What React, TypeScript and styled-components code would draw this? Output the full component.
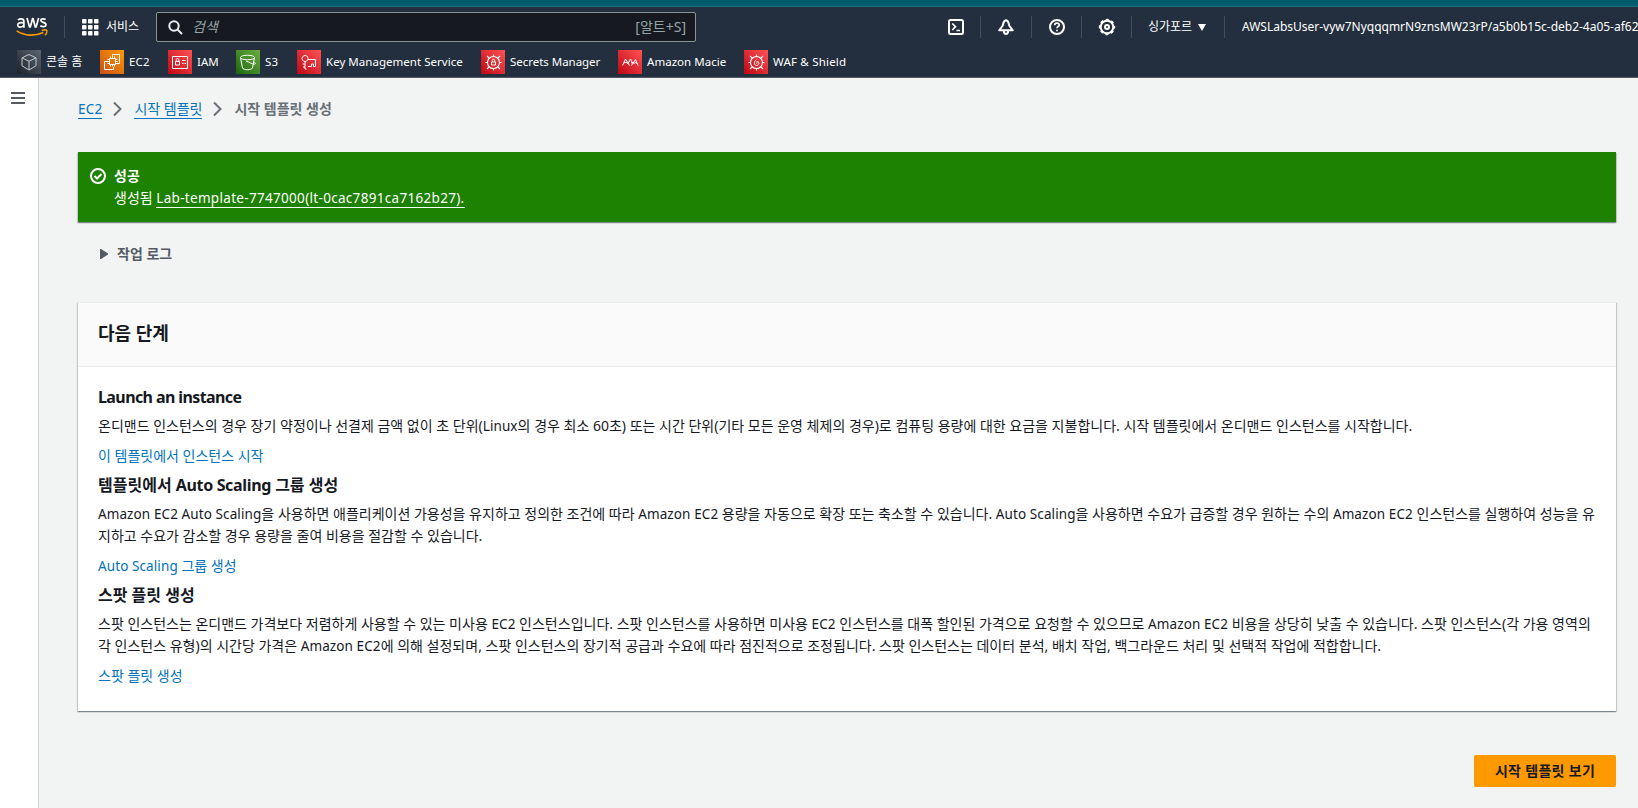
import React from 'react';
import styled, { createGlobalStyle } from 'styled-components';

const Global = createGlobalStyle`
  *, *::before, *::after { box-sizing: border-box; }
  body { margin: 0; overflow: hidden; background: #f2f3f3; color: #16191f;
    font-family: 'Noto Sans', 'Noto Sans CJK KR', sans-serif; font-size: 14px; line-height: 22px; }
  p, h2, h3 { margin: 0; }
`;

const Page = styled.div`display: flex; flex-direction: column; width: 100%; height: 808px; overflow: hidden;`;
const Strip = styled.div`flex: none; height: 7px; background: #005b6d; border-bottom: 1px solid #1b7180;`;
const Header = styled.header`flex: none; height: 71px; background: #232f3e; border-bottom: 1px solid #545b64; color: #fff; font-size: 12px;`;
const NavBar = styled.div`display: flex; align-items: center; height: 40px; padding-left: 16px; & > * { flex: none; }`;
const Divider = styled.span<{ $left?: number; $right?: number }>`flex: none; width: 1px; height: 22px; margin: 0 ${p => p.$right ?? 0}px 0 ${p => p.$left ?? 0}px; background: #414d5c;`;
const Services = styled.div`display: flex; align-items: center; gap: 7px; width: 74px; white-space: nowrap;`;
const Search = styled.div`display: flex; align-items: center; width: 540px; height: 30px; padding: 0 9px 0 11px; background: #16191f; border: 1px solid #879596; border-radius: 2px; color: #95a5a6; font-size: 14px;`;
const Placeholder = styled.span`flex: 1; padding-left: 9px; font-style: italic;`;
const Tools = styled.div`display: flex; align-items: center; margin-left: 235px;`;
const Tool = styled.span`display: flex; flex: none; justify-content: center; width: 49px;`;
const Region = styled.span`display: flex; flex: none; align-items: center; gap: 6px; padding-left: 16px; width: 92px; white-space: nowrap;`;
const Account = styled.span`padding-left: 17px; white-space: nowrap; font-size: 12px; letter-spacing: -0.01px;`;
const Favorites = styled.div`display: flex; align-items: center; height: 30px; padding-left: 17px; line-height: 24px;`;
const Favorite = styled.div<{ $w: number }>`display: flex; align-items: center; gap: 5px; width: ${p => p.$w}px; white-space: nowrap;`;
const Tile = styled.svg`display: block; flex: none; width: 24px; height: 24px;`;

const Latin = styled.span<{ $size?: number; $ls?: number }>`font-size: ${p => p.$size ?? 13.5}px; letter-spacing: ${p => p.$ls ?? 0.1}px;`;

const Body = styled.div`flex: 1; display: flex; min-height: 0;`;
const Side = styled.aside`display: flex; align-items: flex-start; flex: none; width: 39px; padding: 14px 0 0 11px; background: #fff; border-right: 1px solid #cdd3d3;`;
const Main = styled.main`flex: 1; min-width: 0; padding: 20px 22px 0 39px;`;
const Crumbs = styled.nav`display: flex; align-items: center; height: 22px; color: #687078;`;
const Crumb = styled.a`color: #0073bb; border-bottom: 1px solid #0073bb; line-height: 18px; white-space: nowrap;`;
const Current = styled.span`font-weight: 700; white-space: nowrap;`;
const Chevron = styled.svg`flex: none; display: block; margin: 0 12px 0 11px;`;
const shadow = '0 1px 1px 0 rgba(0,28,36,.3), 1px 1px 1px 0 rgba(0,28,36,.15), -1px 1px 1px 0 rgba(0,28,36,.15)';
const Flash = styled.section`display: flex; gap: 8px; height: 70px; margin-top: 32px; padding: 13px 12px; background: #1d8102; color: #fff; box-shadow: ${shadow};`;
const FlashIcon = styled.svg`flex: none; margin-top: 3px;`;
const FlashTitle = styled.p`font-weight: 700;`;
const FlashLink = styled.a`border-bottom: 1px solid #fff; font-size: 13.5px; letter-spacing: 0.31px;`;
const Log = styled.div`display: flex; align-items: center; gap: 9px; height: 22px; margin: 21px 0 0 22px; color: #545b64; font-weight: 700;`;
const Card = styled.section`height: 409px; margin-top: 37px; background: #fff; border-top: 1px solid #eaeded; box-shadow: ${shadow};`;
const CardHeader = styled.div`height: 64px; padding: 19px 20px; background: #fafafa; border-bottom: 1px solid #eaeded;`;
const CardTitle = styled.h2`font-size: 18px; line-height: 22px;`;
const CardBody = styled.div`padding: 19px 20px;`;
const StepTitle = styled.h3`font-size: 16px; line-height: 22px; height: 22px;`;
const StepText = styled.div`margin-top: 7px; white-space: nowrap;`;
const StepLink = styled.a`display: block; margin-top: 8px; height: 22px; color: #0073bb; margin-bottom: 7px;`;
const Line = styled.p`height: 22px;`;
const Actions = styled.div`display: flex; justify-content: flex-end; margin-top: 44px;`;
const Button = styled.button`width: 142px; height: 32px; padding: 0; border: 0; border-radius: 2px; background: #ff9900; color: #16191f; font: 700 14px/22px 'Noto Sans', 'Noto Sans CJK KR', sans-serif; letter-spacing: 0.3px;`;

/* Sets runs of Latin words slightly smaller than the Hangul around them. */
const Mixed = ({ text, size, ls }: { text: string; size?: number; ls?: number }) => (
  <>
    {text.split(/([A-Za-z][A-Za-z0-9 ]*[A-Za-z0-9])/).map((part, i) =>
      i % 2 ? <Latin key={i} $size={size} $ls={ls}>{part}</Latin> : part)}
  </>
);

const AwsLogo = () => (
  <svg width="32" height="20" viewBox="0 0 32 20" fill="none">
    <g stroke="#fff" strokeWidth="1.7">
      <path d="M2 3C2.800 2.200 3.900 1.800 5.100 1.800c2 0 2.800.9 2.800 2.600v6.300M7.900 5.800C4 5.100 1.700 5.900 1.700 8.100c0 2.900 4.600 2.600 6.200 0" />
      <path d="M11 1.100l2.500 8.900h.8l2.200-8.300h.6l2.200 8.300h.8l2.500-8.900" strokeLinejoin="round" />
      <path d="M29.600 2.400c-1.800-.9-4.800-.8-4.800 1.100 0 2.400 5.200 1.400 5.200 4.200 0 2.300-3.500 2.500-5.700 1.100" />
    </g>
    <path d="M.7 13.900c7.700 5.200 18.400 5.400 26.600 1.500" stroke="#f90" strokeWidth="1.700" />
    <path d="M25.800 13.500c1.700-.6 4.500-1 5 .1.300 1-.6 3.300-1.900 4.600" stroke="#f90" strokeWidth="1.400" />
  </svg>
);

type Kind = 'home' | 'ec2' | 'iam' | 's3' | 'kms' | 'secrets' | 'macie' | 'waf';
const gradients: Record<string, [string, string]> = {
  home: ['#1b222a', '#5b6470'], ec2: ['#c8511b', '#ff9900'], s3: ['#1b660f', '#6cae3e'], red: ['#bd0816', '#ff5252'],
};
const target = <><circle cx="12.500" cy="12.500" r="6" strokeWidth="1.100" /><path d="M4.500 12.500h2.500m11 0h2.500M12.500 4.500v2.500m0 11v2.500M6 6l2.500 2.500m8 8L19 19M6 19l2.500-2.500m8-8L19 6" strokeWidth="1.100" /></>;
const glyphs: Record<Kind, React.ReactNode> = {
  home: <path d="M12 4.500l7 3.300v8L12 20l-7-4.200v-8zM5 7.800l7 3.500 7-3.500M12 11.300V20" stroke="#c4cad0" />,
  ec2: <path d="M9.500 8.500h6v6h-6zM10.500 6.500v2m2-2v2m2-2v2m-4 6v2m2-2v2m2-2v2m-7-7h2m-2 2h2m-2 2h2m6-4h2m-2 2h2m-2 2h2M12.500 7V4.500h7v9H17M8 11.500H4.500v8h9V17" />,
  iam: <path d="M4.500 6.500h15v12h-15zM7.500 11.500h4v3.500h-4zM8.200 11.500V9.800a1.300 1.300 0 012.600 0v1.700M14 10.500h3.500M14 13.500h1.500m1 0h1.500" />,
  s3: <path d="M4.500 7.500c0-3 14-3 14 0s-14 3-14 0l2 10.500c1 2.300 9 2.300 10 0l2-10.500M10 11l7 3c3 .8 3-1.200.5-2.200" />,
  kms: <path d="M8 11.500a3 3 0 11.1 0zM8 11.500V19m0-5H5.500m2.500 3H6M8 19h1.500M11 9.500h7.500v7h-2V14h-2v2.500h-3.500" />,
  secrets: <>{target}<path d="M10.500 12h4v3h-4zM11.300 12v-1.500a1.200 1.200 0 012.400 0V12" /></>,
  macie: <path d="M4.500 15.500l3-6.500 4 6.500M6 13c1.500-1.500 3-.5 4 1M10 13.500l2.500-4.500 2 4M13.500 15.500l4-6 2.500 6M13 13c1.500-1.500 2.500 1.500 3.500 0s2 0 2.500 1" />,
  waf: <>{target}<path d="M12.500 9.500c-3.500 3-2 6 0 6s3.500-2 1-4.500c-1 1 0 2.500-1 2.500" /></>,
};
const ServiceTile = ({ kind }: { kind: Kind }) => {
  const [from, to] = gradients[kind] ?? gradients.red;
  return (
    <Tile viewBox="0 0 24 24" fill="none" stroke="#fff" strokeWidth="1">
      <defs><linearGradient id={`g-${kind}`} x1="0" y1="1" x2="1" y2="0"><stop stopColor={from} /><stop offset="1" stopColor={to} /></linearGradient></defs>
      <path d="M0 0h24v24H0z" fill={`url(#g-${kind})`} stroke="none" />
      {glyphs[kind]}
    </Tile>
  );
};

const favorites: { kind: Kind; label: string; w: number; ls?: number }[] = [
  { kind: 'home', label: '콘솔 홈', w: 83 }, { kind: 'ec2', label: 'EC2', w: 68, ls: 0.2 }, { kind: 'iam', label: 'IAM', w: 68 },
  { kind: 's3', label: 'S3', w: 61, ls: 0.2 }, { kind: 'kms', label: 'Key Management Service', w: 184 },
  { kind: 'secrets', label: 'Secrets Manager', w: 137, ls: -0.03 }, { kind: 'macie', label: 'Amazon Macie', w: 126 }, { kind: 'waf', label: 'WAF & Shield', w: 110, ls: 0.2 },
];

const steps = [
  { title: 'Launch an instance', ls: -0.6, lines: ['온디맨드 인스턴스의 경우 장기 약정이나 선결제 금액 없이 초 단위(Linux의 경우 최소 60초) 또는 시간 단위(기타 모든 운영 체제의 경우)로 컴퓨팅 용량에 대한 요금을 지불합니다. 시작 템플릿에서 온디맨드 인스턴스를 시작합니다.'], link: '이 템플릿에서 인스턴스 시작' },
  { title: '템플릿에서 Auto Scaling 그룹 생성', ls: -0.34, lines: ['Amazon EC2 Auto Scaling을 사용하면 애플리케이션 가용성을 유지하고 정의한 조건에 따라 Amazon EC2 용량을 자동으로 확장 또는 축소할 수 있습니다. Auto Scaling을 사용하면 수요가 급증할 경우 원하는 수의 Amazon EC2 인스턴스를 실행하여 성능을 유', '지하고 수요가 감소할 경우 용량을 줄여 비용을 절감할 수 있습니다.'], link: 'Auto Scaling 그룹 생성' },
  { title: '스팟 플릿 생성', ls: 0, lines: ['스팟 인스턴스는 온디맨드 가격보다 저렴하게 사용할 수 있는 미사용 EC2 인스턴스입니다. 스팟 인스턴스를 사용하면 미사용 EC2 인스턴스를 대폭 할인된 가격으로 요청할 수 있으므로 Amazon EC2 비용을 상당히 낮출 수 있습니다. 스팟 인스턴스(각 가용 영역의', '각 인스턴스 유형)의 시간당 가격은 Amazon EC2에 의해 설정되며, 스팟 인스턴스의 장기적 공급과 수요에 따라 점진적으로 조정됩니다. 스팟 인스턴스는 데이터 분석, 배치 작업, 백그라운드 처리 및 선택적 작업에 적합합니다.'], link: '스팟 플릿 생성' },
];

const ChevronIcon = () => (
  <Chevron width="9" height="16" viewBox="0 0 9 16" fill="none" stroke="#687078" strokeWidth="2"><path d="M1 1.500L7.500 8 1 14.500" /></Chevron>
);

export default function App() {
  return (
    <Page>
      <Global />
      <Strip />
      <Header>
        <NavBar>
          <AwsLogo />
          <Divider $left={16} $right={17} />
          <Services>
            <svg width="17" height="17" viewBox="0 0 17 17" fill="#fff">
              {[0, 6, 12].flatMap(y => [0, 6, 12].map(x => <rect key={`${x}-${y}`} x={x} y={y} width="4.500" height="4.500" rx=".8" />))}
            </svg>
            서비스
          </Services>
          <Search>
            <svg width="15" height="15" viewBox="0 0 15 15" fill="none" stroke="#eaeded" strokeWidth="2"><circle cx="6" cy="6" r="4.700" /><path d="M9.500 9.500l4.500 4.500" /></svg>
            <Placeholder>검색</Placeholder>
            <span>[알트+S]</span>
          </Search>
          <Tools>
            <Tool><svg width="18" height="18" viewBox="0 0 18 18" fill="none" stroke="#fff" strokeWidth="2"><rect x="2" y="2" width="14" height="14" rx="1.500" /><path d="M5.300 5.500L8.500 8.700 5.300 12M9.500 12.500h3.500" strokeWidth="1.700" /></svg></Tool>
            <Divider />
            <Tool><svg width="18" height="18" viewBox="0 0 18 18" fill="none" stroke="#fff" strokeWidth="2"><path d="M9 2.200C6 2.700 6.500 6 5.500 8L2.200 12.300h13.600L12.500 8C11.500 6 12 2.700 9 2.200zM6.800 13c.3 4 4.100 4 4.400 0" strokeLinejoin="round" /></svg></Tool>
            <Divider $left={1} />
            <Tool><svg width="18" height="18" viewBox="0 0 18 18" fill="none" stroke="#fff" strokeWidth="2"><circle cx="9" cy="9" r="7" /><path d="M6.700 7.300c0-3 4.600-2.800 4.600-.3 0 1.500-2.300 1.500-2.300 3.300M9 11.700v1.600" strokeWidth="1.700" /></svg></Tool>
            <Divider />
            <Tool><svg width="18" height="18" viewBox="0 0 18 18" fill="none" stroke="#fff"><circle cx="9" cy="9" r="6.300" strokeWidth="2" /><circle cx="9" cy="9" r="7.400" strokeWidth="1.600" strokeDasharray="3.100 2.711" strokeDashoffset="1.550" /><circle cx="9" cy="9" r="2" strokeWidth="2" /></svg></Tool>
            <Divider />
            <Region>싱가포르 <svg width="8" height="7" viewBox="0 0 8 7" fill="#fff"><path d="M0 0h8L4 7z" /></svg></Region>
            <Divider />
            <Account>AWSLabsUser-vyw7NyqqqmrN9znsMW23rP/a5b0b15c-deb2-4a05-af62</Account>
          </Tools>
        </NavBar>
        <Favorites>
          {favorites.map(f => (
            <Favorite key={f.kind} $w={f.w}>
              <ServiceTile kind={f.kind} />
              {f.kind === 'home' ? f.label : <Latin $size={11.5} $ls={f.ls ?? 0.03}>{f.label}</Latin>}
            </Favorite>
          ))}
        </Favorites>
      </Header>
      <Body>
        <Side>
          <svg width="14" height="12" viewBox="0 0 14 12" stroke="#545b64" strokeWidth="2"><path d="M0 1h14M0 6h14M0 11h14" /></svg>
        </Side>
        <Main>
          <Crumbs>
            <Crumb><Latin $ls={0.2}>EC2</Latin></Crumb><ChevronIcon /><Crumb>시작 템플릿</Crumb><ChevronIcon /><Current>시작 템플릿 생성</Current>
          </Crumbs>
          <Flash>
            <FlashIcon width="16" height="16" viewBox="0 0 16 16" fill="none" stroke="#fff" strokeWidth="2"><circle cx="8" cy="8" r="7" /><path d="M4.500 8l2.500 2.500L11.500 6" /></FlashIcon>
            <div>
              <FlashTitle>성공</FlashTitle>
              <p>생성됨 <FlashLink>Lab-template-7747000(lt-0cac7891ca7162b27).</FlashLink></p>
            </div>
          </Flash>
          <Log>
            <svg width="8" height="10" viewBox="0 0 8 10" fill="#545b64"><path d="M0 0h1l7 4.500v1L1 10H0z" /></svg>
            작업 로그
          </Log>
          <Card>
            <CardHeader><CardTitle>다음 단계</CardTitle></CardHeader>
            <CardBody>
              {steps.map(s => (
                <section key={s.title}>
                  <StepTitle><Mixed text={s.title} size={16} ls={s.ls} /></StepTitle>
                  <StepText>{s.lines.map(l => <Line key={l}><Mixed text={l} /></Line>)}</StepText>
                  <StepLink><Mixed text={s.link} /></StepLink>
                </section>
              ))}
            </CardBody>
          </Card>
          <Actions><Button>시작 템플릿 보기</Button></Actions>
        </Main>
      </Body>
    </Page>
  );
}
